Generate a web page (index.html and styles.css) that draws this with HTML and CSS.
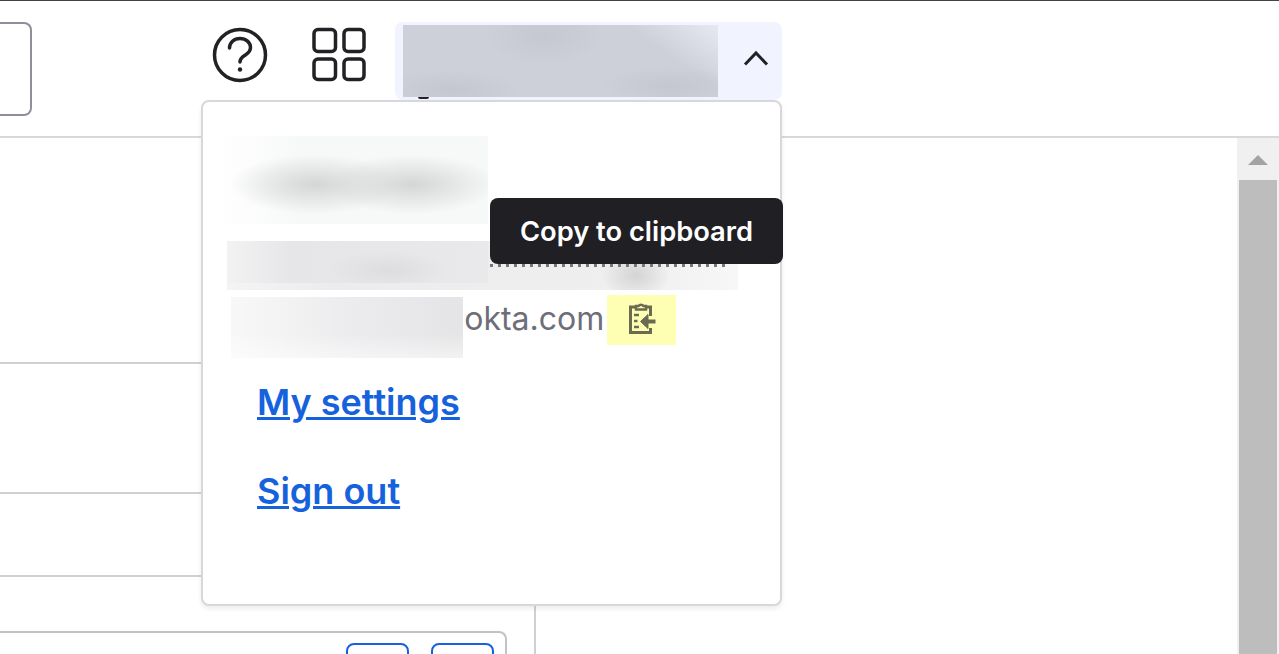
FILE: index.html
```html
<!DOCTYPE html>
<html lang="en">
<head>
  <meta charset="UTF-8" />
  <title>Account menu</title>
  <link rel="stylesheet" href="styles.css">
</head>
<body>
  <header class="topbar">
    <div class="search-box"></div>
    <button class="icon-btn help-btn" aria-label="Help">
      <svg width="56" height="56" viewBox="0 0 56 56" fill="none" stroke="#222226" stroke-width="3.500" stroke-linecap="round" stroke-linejoin="round">
        <circle cx="28" cy="28" r="25.500"/>
        <path d="M17.500 21c0-5.500 4.500-9.500 10.500-9.500s10.500 4 10.500 9c0 4.500-2.800 6-5.500 7.700-2.600 1.600-5 2.800-5 6.800"/>
        <circle cx="28" cy="42.500" r="2.200" fill="#222226" stroke="none"/>
      </svg>
    </button>
    <button class="icon-btn grid-btn" aria-label="Apps">
      <svg width="56" height="56" viewBox="0 0 56 56" fill="none" stroke="#222226" stroke-width="3.500">
        <rect x="3" y="2.500" width="21.500" height="22" rx="4"/>
        <rect x="33" y="2.500" width="20" height="22" rx="4"/>
        <rect x="3" y="32" width="21.500" height="20.500" rx="4"/>
        <rect x="33" y="32" width="20" height="20.500" rx="4"/>
      </svg>
    </button>
    <button class="user-btn" aria-label="Account">
      <span class="user-name"></span>
      <span class="descender"></span>
      <svg class="chevron" width="26" height="16" viewBox="0 0 26 16" fill="none" stroke="#222226" stroke-width="3">
        <path d="M2 14.500 13 3l11 11.500"/>
      </svg>
    </button>
  </header>

  <main class="content">
    <section class="left-col">
      <div class="row row-a"></div>
      <div class="row row-b"></div>
      <div class="row row-c"></div>
      <div class="card">
        <span class="card-btn"></span>
        <span class="card-btn"></span>
      </div>
    </section>
    <div class="scrollbar">
      <div class="scroll-arrow"></div>
      <div class="scroll-thumb"></div>
    </div>
  </main>

  <div class="menu">
    <div class="blur blur-name"></div>
    <div class="blur blur-line-wide"></div>
    <div class="blur blur-line"></div>
    <div class="blur blur-org"></div>
    <div class="org-row">
      <span class="org-text">.okta.com</span>
      <button class="copy-btn" aria-label="Copy to clipboard">
        <svg width="28" height="34" viewBox="0 0 28 34" fill="none" stroke="#6b6b52" stroke-width="3">
          <path d="M7 6H2.500v25.500h20V27"/>
          <path d="M18 6h4.500v9"/>
          <path d="M8 8.500V5h2.500a3 3 0 0 1 5 0H18v3.500z" stroke-width="2.500"/>
          <path d="M6 14h5M6 20h3.500M6 26h5" stroke-width="2.500"/>
          <path d="M27.500 20.500H15" stroke-width="4"/>
          <path d="M20 13.500 12.500 20.500l7.500 7z" fill="#6b6b52" stroke-width="1"/>
        </svg>
      </button>
    </div>
    <a class="menu-link" href="#">My settings</a>
    <a class="menu-link" href="#">Sign out</a>
  </div>

  <div class="tooltip">Copy to clipboard</div>
</body>
</html>
```

FILE: styles.css
```css
html, body {
  height: 654px;
  overflow: hidden;
}
body {
  margin: 0;
  background: #fff;
  font-family: 'Inter', 'Liberation Sans', sans-serif;
  position: relative;
  border-top: 1px solid #444;
  box-sizing: border-box;
}
button {
  padding: 0;
  border: none;
  background: none;
  cursor: pointer;
  font-family: inherit;
}

/* top bar */
.topbar {
  height: 135px;
  display: flex;
  align-items: flex-start;
  border-bottom: 2px solid #d8d8dc;
}
.search-box {
  width: 30px;
  height: 90px;
  margin-top: 21px;
  border: 2px solid #8f8f99;
  border-left: none;
  border-radius: 0 8px 8px 0;
}
.icon-btn {
  width: 56px;
  height: 56px;
  margin-top: 26px;
}
.help-btn {
  margin-left: 180px;
}
.grid-btn {
  margin-left: 43px;
}
.user-btn {
  width: 387px;
  height: 78px;
  margin-top: 21px;
  margin-left: 28px;
  background: #f1f3fe;
  border-radius: 8px;
  display: flex;
  align-items: center;
  padding-left: 8px;
  position: relative;
  box-sizing: border-box;
}
.user-name {
  width: 315px;
  height: 72px;
  background:
    radial-gradient(ellipse 60px 30px at 45% 15%, #c5c7d1, transparent),
    radial-gradient(ellipse 70px 20px at 15% 90%, #c4c6d0, transparent),
    radial-gradient(ellipse 70px 20px at 85% 85%, #c4c6d0, transparent),
    linear-gradient(215deg, #e6e8f2 0, #cdcfd9 22%, #cdcfd9 100%);
}
.descender {
  position: absolute;
  left: 23px;
  top: 75px;
  width: 11px;
  height: 2px;
  border-radius: 0 0 6px 6px;
  background: #222226;
}
.chevron {
  margin-left: 25px;
  margin-top: -6px;
}

/* page behind the menu */
.content {
  display: flex;
  justify-content: space-between;
  height: 516px;
}
.left-col {
  width: 534px;
  border-right: 2px solid #d0d0d4;
  overflow: hidden;
}
.row {
  border-bottom: 2px solid #d0d0d4;
}
.row-a {
  height: 224px;
}
.row-b {
  height: 128px;
}
.row-c {
  height: 81px;
}
.card {
  margin-top: 54px;
  width: 507px;
  height: 23px;
  box-sizing: border-box;
  border-top: 2px solid #c2c2c8;
  border-right: 2px solid #c2c2c8;
  border-radius: 0 8px 0 0;
  display: flex;
  justify-content: flex-end;
  gap: 22px;
  padding: 10px 11px 0 0;
  overflow: hidden;
}
.card-btn {
  width: 59px;
  height: 40px;
  flex: none;
  border: 2px solid #1662dd;
  border-radius: 8px;
}
.scrollbar {
  width: 42px;
  background: #f0f0f0;
  display: flex;
  flex-direction: column;
  align-items: center;
}
.scroll-arrow {
  margin-top: 17px;
  margin-bottom: 15px;
  width: 0;
  height: 0;
  border-left: 10px solid transparent;
  border-right: 10px solid transparent;
  border-bottom: 10px solid #a3a3a3;
}
.scroll-thumb {
  width: 38px;
  flex: 1;
  background: #bdbdbd;
}

/* account dropdown */
.menu {
  position: absolute;
  left: 201px;
  top: 99px;
  width: 581px;
  height: 506px;
  box-sizing: border-box;
  background: #fff;
  border: 2px solid #d8d8dc;
  border-radius: 8px;
  box-shadow: 0 3px 5px rgba(0, 0, 0, 0.07);
  padding: 193px 0 0 54px;
  display: flex;
  flex-direction: column;
  align-items: flex-start;
}
.blur {
  position: absolute;
}
.blur-name {
  left: 15px;
  top: 34px;
  width: 270px;
  height: 88px;
  background:
    radial-gradient(ellipse 85px 30px at 36% 55%, #d4d5d5, transparent),
    radial-gradient(ellipse 85px 30px at 72% 55%, #d4d5d5, transparent),
    linear-gradient(90deg, #fff, #f7f8f8 30%);
}
.blur-line-wide {
  left: 24px;
  top: 139px;
  width: 511px;
  height: 49px;
  background:
    radial-gradient(ellipse 34px 24px at 80% 70%, #d4d4d4, transparent),
    linear-gradient(90deg, #f4f4f5, #ececee 20%, #efefef 80%, #f7f7f7);
}
/* bits of the address line that show under the tooltip */
.blur-line-wide::after {
  content: "";
  position: absolute;
  left: 263px;
  top: 23px;
  width: 235px;
  height: 3px;
  background: repeating-linear-gradient(90deg, #77777f 0 3px, transparent 3px 8px);
}
.blur-line {
  left: 24px;
  top: 139px;
  width: 261px;
  height: 42px;
  background:
    radial-gradient(ellipse 60px 20px at 62% 70%, #dddddf, transparent),
    linear-gradient(90deg, #f2f2f3, #e6e6e8 25%, #e9e9eb);
}
.blur-org {
  left: 28px;
  top: 195px;
  width: 232px;
  height: 61px;
  z-index: 1;
  background: linear-gradient(90deg, #f8f8f8, #ececee 50%, #e5e5e7 95%);
  mask-image: linear-gradient(180deg, #000 60%, rgba(0, 0, 0, 0.5));
}
.org-row {
  display: flex;
  align-items: center;
  margin-left: 198px;
  height: 50px;
}
.org-text {
  font-size: 32px;
  color: #6e6e78;
  white-space: nowrap;
  margin-right: 3px;
  margin-top: -4px;
}
.copy-btn {
  width: 69px;
  height: 50px;
  background: #ffffb4;
  display: flex;
  align-items: center;
  justify-content: center;
  padding-bottom: 5px;
  box-sizing: border-box;
}
.menu-link {
  font-size: 36px;
  font-weight: 600;
  color: #1662dd;
  line-height: 42px;
  margin-top: 36px;
}
.menu-link + .menu-link {
  margin-top: 47px;
}

.tooltip {
  position: absolute;
  left: 490px;
  top: 197px;
  width: 293px;
  height: 66px;
  box-sizing: border-box;
  background: #1f1f24;
  border-radius: 8px;
  color: #fff;
  font-size: 27.300px;
  font-weight: 600;
  display: flex;
  align-items: center;
  justify-content: center;
}
```
